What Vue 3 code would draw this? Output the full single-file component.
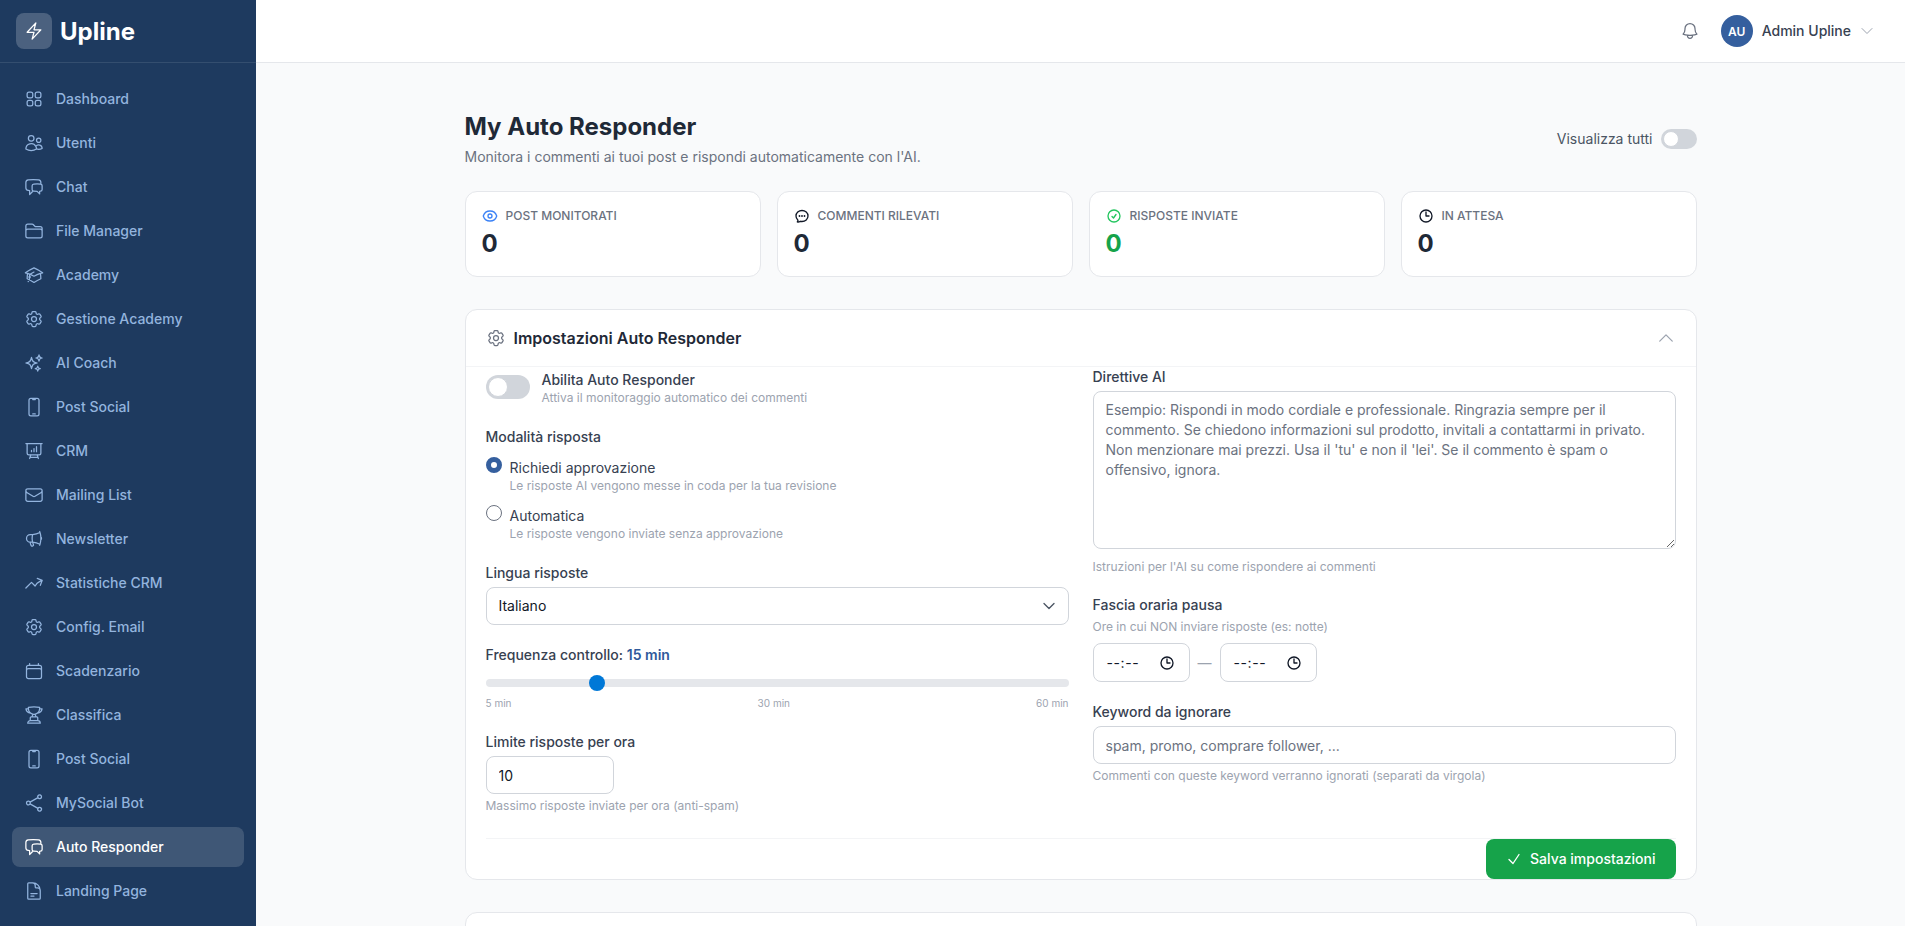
<script setup>
import { h } from 'vue'

const P = {
  grid: 'M3.75 6A2.25 2.25 0 0 1 6 3.75h2.25A2.25 2.25 0 0 1 10.5 6v2.25a2.25 2.25 0 0 1-2.25 2.25H6a2.25 2.25 0 0 1-2.25-2.25V6ZM3.75 15.75A2.25 2.25 0 0 1 6 13.5h2.25a2.25 2.25 0 0 1 2.25 2.25V18a2.25 2.25 0 0 1-2.25 2.25H6A2.25 2.25 0 0 1 3.75 18v-2.25ZM13.5 6a2.25 2.25 0 0 1 2.25-2.25H18A2.25 2.25 0 0 1 20.25 6v2.25A2.25 2.25 0 0 1 18 10.5h-2.25a2.25 2.25 0 0 1-2.25-2.25V6ZM13.5 15.75a2.25 2.25 0 0 1 2.25-2.25H18a2.25 2.25 0 0 1 2.25 2.25V18A2.25 2.25 0 0 1 18 20.25h-2.25A2.25 2.25 0 0 1 13.5 18v-2.25Z',
  users: 'M15 19.128a9.38 9.38 0 0 0 2.625.372 9.337 9.337 0 0 0 4.121-.952 4.125 4.125 0 0 0-7.533-2.493M15 19.128v-.003c0-1.113-.285-2.16-.786-3.07M15 19.128v.106A12.318 12.318 0 0 1 8.624 21c-2.331 0-4.512-.645-6.374-1.766l-.001-.109a6.375 6.375 0 0 1 11.964-3.07M12 6.375a3.375 3.375 0 1 1-6.75 0 3.375 3.375 0 0 1 6.75 0Zm8.25 2.25a2.625 2.625 0 1 1-5.25 0 2.625 2.625 0 0 1 5.25 0Z',
  chat: 'M20.25 8.511c.884.284 1.5 1.128 1.5 2.097v4.286c0 1.136-.847 2.1-1.98 2.193-.34.027-.68.052-1.02.072v3.091l-3-3c-1.354 0-2.694-.055-4.02-.163a2.115 2.115 0 0 1-.825-.242m9.345-8.334a2.126 2.126 0 0 0-.476-.095 48.64 48.64 0 0 0-8.048 0c-1.131.094-1.976 1.057-1.976 2.192v4.286c0 .837.46 1.58 1.155 1.951m9.345-8.334V6.637c0-1.621-1.152-3.026-2.76-3.235A48.455 48.455 0 0 0 11.25 3c-2.115 0-4.198.137-6.24.402-1.608.209-2.76 1.614-2.76 3.235v6.226c0 1.621 1.152 3.026 2.76 3.235.577.075 1.157.14 1.74.194V21l4.155-4.155',
  folder: 'M2.25 12.75V12A2.25 2.25 0 0 1 4.5 9.75h15A2.25 2.25 0 0 1 21.75 12v.75m-8.69-6.44-2.12-2.12a1.5 1.5 0 0 0-1.061-.44H4.5A2.25 2.25 0 0 0 2.25 6v12a2.25 2.25 0 0 0 2.25 2.25h15A2.25 2.25 0 0 0 21.75 18V9a2.25 2.25 0 0 0-2.25-2.25h-5.379a1.5 1.5 0 0 1-1.06-.44Z',
  cap: 'M4.26 10.147a60.438 60.438 0 0 0-.491 6.347A48.62 48.62 0 0 1 12 20.904a48.62 48.62 0 0 1 8.232-4.41 60.46 60.46 0 0 0-.491-6.347m-15.482 0a50.636 50.636 0 0 0-2.658-.813A59.906 59.906 0 0 1 12 3.493a59.903 59.903 0 0 1 10.399 5.84c-.896.248-1.783.52-2.658.814m-15.482 0A50.717 50.717 0 0 1 12 13.489a50.702 50.702 0 0 1 7.74-3.342M6.75 15a.75.75 0 1 0 0-1.5.75.75 0 0 0 0 1.5Zm0 0v-3.675A55.378 55.378 0 0 1 12 8.443m-7.007 11.55A5.981 5.981 0 0 0 6.75 15.75v-1.5',
  cog: 'M9.594 3.94c.09-.542.56-.94 1.11-.94h2.593c.55 0 1.02.398 1.11.94l.213 1.281c.063.374.313.686.645.87.074.04.147.083.22.127.325.196.72.257 1.075.124l1.217-.456a1.125 1.125 0 0 1 1.37.49l1.296 2.247a1.125 1.125 0 0 1-.26 1.431l-1.003.827c-.293.241-.438.613-.43.992a7.723 7.723 0 0 1 0 .255c-.008.378.137.75.43.991l1.004.827c.424.35.534.955.26 1.43l-1.298 2.247a1.125 1.125 0 0 1-1.369.491l-1.217-.456c-.355-.133-.75-.072-1.076.124a6.47 6.47 0 0 1-.22.128c-.331.183-.581.495-.644.869l-.213 1.281c-.09.543-.56.94-1.11.94h-2.594c-.55 0-1.019-.398-1.11-.94l-.213-1.281c-.062-.374-.312-.686-.644-.87a6.52 6.52 0 0 1-.22-.127c-.325-.196-.72-.257-1.076-.124l-1.217.456a1.125 1.125 0 0 1-1.369-.49l-1.297-2.247a1.125 1.125 0 0 1 .26-1.431l1.004-.827c.292-.24.437-.613.43-.991a6.932 6.932 0 0 1 0-.255c.007-.38-.138-.751-.43-.992l-1.004-.827a1.125 1.125 0 0 1-.26-1.43l1.297-2.247a1.125 1.125 0 0 1 1.37-.491l1.216.456c.356.133.751.072 1.076-.124.072-.044.146-.086.22-.128.332-.183.582-.495.644-.869l.214-1.28ZM15 12a3 3 0 1 1-6 0 3 3 0 0 1 6 0Z',
  sparkles: 'M9.813 15.904 9 18.75l-.813-2.846a4.5 4.5 0 0 0-3.09-3.09L2.25 12l2.846-.813a4.5 4.5 0 0 0 3.09-3.09L9 5.25l.813 2.846a4.5 4.5 0 0 0 3.09 3.09L15.75 12l-2.846.813a4.5 4.5 0 0 0-3.09 3.09ZM18.259 8.715 18 9.75l-.259-1.035a3.375 3.375 0 0 0-2.455-2.456L14.25 6l1.036-.259a3.375 3.375 0 0 0 2.455-2.456L18 2.25l.259 1.035a3.375 3.375 0 0 0 2.456 2.456L21.75 6l-1.035.259a3.375 3.375 0 0 0-2.456 2.456ZM16.894 20.567 16.5 21.75l-.394-1.183a2.25 2.25 0 0 0-1.423-1.423L13.5 18.75l1.183-.394a2.25 2.25 0 0 0 1.423-1.423l.394-1.183.394 1.183a2.25 2.25 0 0 0 1.423 1.423l1.183.394-1.183.394a2.25 2.25 0 0 0-1.423 1.423Z',
  phone: 'M10.5 1.5H8.25A2.25 2.25 0 0 0 6 3.75v16.5a2.25 2.25 0 0 0 2.25 2.25h7.5A2.25 2.25 0 0 0 18 20.25V3.75a2.25 2.25 0 0 0-2.25-2.25H13.5m-3 0V3h3V1.5m-3 0h3m-3 18.75h3',
  board: 'M3.75 3v11.25A2.25 2.25 0 0 0 6 16.5h2.25M3.75 3h-1.5m1.5 0h16.5m0 0h1.5m-1.5 0v11.25A2.25 2.25 0 0 1 18 16.5h-2.25m-7.5 0h7.5m-7.5 0-1 3m8.5-3 1 3m0 0 .5 1.5m-.5-1.5h-9.5m0 0-.5 1.5M9 11.25v1.5M12 9v3.75m3-6v6',
  mail: 'M21.75 6.75v10.5a2.25 2.25 0 0 1-2.25 2.25h-15a2.25 2.25 0 0 1-2.25-2.25V6.75m19.5 0A2.25 2.25 0 0 0 19.5 4.5h-15a2.25 2.25 0 0 0-2.25 2.25m19.5 0v.243a2.25 2.25 0 0 1-1.07 1.916l-7.5 4.615a2.25 2.25 0 0 1-2.36 0L3.32 8.91a2.25 2.25 0 0 1-1.07-1.916V6.75',
  mega: 'M10.34 15.84c-.688-.06-1.386-.09-2.09-.09H7.5a4.5 4.5 0 1 1 0-9h.75c.704 0 1.402-.03 2.09-.09m0 9.18c.253.962.584 1.892.985 2.783.247.55.06 1.21-.463 1.511l-.657.38c-.551.318-1.26.117-1.527-.461a20.845 20.845 0 0 1-1.44-4.282m3.102.069a18.03 18.03 0 0 1-.59-4.59c0-1.586.205-3.124.59-4.59m0 9.18a23.848 23.848 0 0 1 8.835 2.535M10.34 6.66a23.847 23.847 0 0 0 8.835-2.535m0 0A23.74 23.74 0 0 0 18.795 3m.38 1.125a23.91 23.91 0 0 1 1.014 5.395m-1.014 8.855c-.118.38-.245.754-.38 1.125m.38-1.125a23.91 23.91 0 0 0 1.014-5.395m0-3.46c.495.413.811 1.035.811 1.73 0 .695-.316 1.317-.811 1.73m0-3.46a24.347 24.347 0 0 1 0 3.46',
  trend: 'M2.25 18 9 11.25l4.306 4.306a11.95 11.95 0 0 1 5.814-5.518l2.74-1.22m0 0-5.94-2.281m5.94 2.28-2.28 5.941',
  cal: 'M6.75 3v2.25M17.25 3v2.25M3 18.75V7.5a2.25 2.25 0 0 1 2.25-2.25h13.5A2.25 2.25 0 0 1 21 7.5v11.25m-18 0A2.25 2.25 0 0 0 5.25 21h13.5A2.25 2.25 0 0 0 21 18.75m-18 0v-7.5A2.25 2.25 0 0 1 5.25 9h13.5A2.25 2.25 0 0 1 21 11.25v7.5',
  trophy: 'M16.5 18.75h-9m9 0a3 3 0 0 1 3 3h-15a3 3 0 0 1 3-3m9 0v-3.375c0-.621-.503-1.125-1.125-1.125h-.871M7.5 18.75v-3.375c0-.621.504-1.125 1.125-1.125h.872m5.007 0H9.497m5.007 0a7.454 7.454 0 0 1-.982-3.172M9.497 14.25a7.454 7.454 0 0 0 .981-3.172M5.25 4.236c-.982.143-1.954.317-2.916.52A6.003 6.003 0 0 0 7.73 9.728M5.25 4.236V4.5c0 2.108.966 3.99 2.48 5.228M5.25 4.236V2.721C7.456 2.41 9.71 2.25 12 2.25c2.291 0 4.545.16 6.75.47v1.516M7.73 9.728a6.726 6.726 0 0 0 2.748 1.35m8.272-6.842V4.5c0 2.108-.966 3.99-2.48 5.228m2.48-5.492a46.32 46.32 0 0 1 2.916.52 6.003 6.003 0 0 1-5.395 4.972m0 0a6.726 6.726 0 0 1-2.749 1.35m0 0a6.772 6.772 0 0 1-3.044 0',
  share: 'M7.217 10.907a2.25 2.25 0 1 0 0 2.186m0-2.186c.18.324.283.696.283 1.093s-.103.77-.283 1.093m0-2.186 9.566-5.314m-9.566 7.5 9.566 5.314m0 0a2.25 2.25 0 1 0 3.935 2.186 2.25 2.25 0 0 0-3.935-2.186Zm0-12.814a2.25 2.25 0 1 0 3.933-2.185 2.25 2.25 0 0 0-3.933 2.185Z',
  doc: 'M19.5 14.25v-2.625a3.375 3.375 0 0 0-3.375-3.375h-1.5A1.125 1.125 0 0 1 13.5 7.125v-1.5a3.375 3.375 0 0 0-3.375-3.375H8.25m0 12.75h7.5m-7.5 3H12M10.5 2.25H5.625c-.621 0-1.125.504-1.125 1.125v17.25c0 .621.504 1.125 1.125 1.125h12.75c.621 0 1.125-.504 1.125-1.125V11.25a9 9 0 0 0-9-9Z',
  bolt: 'm3.75 13.5 10.5-11.25L12 10.5h8.25L9.75 21.75 12 13.5H3.75Z',
  bell: 'M14.857 17.082a23.848 23.848 0 0 0 5.454-1.31A8.967 8.967 0 0 1 18 9.75V9A6 6 0 0 0 6 9v.75a8.967 8.967 0 0 1-2.312 6.022c1.733.64 3.56 1.085 5.455 1.31m5.714 0a24.255 24.255 0 0 1-5.714 0m5.714 0a3 3 0 1 1-5.714 0',
  down: 'm19.5 8.25-7.5 7.5-7.5-7.5',
  up: 'm4.5 15.75 7.5-7.5 7.5 7.5',
  eye: 'M2.036 12.322a1.012 1.012 0 0 1 0-.639C3.423 7.51 7.36 4.5 12 4.5c4.638 0 8.573 3.007 9.963 7.178.07.207.07.431 0 .639C20.577 16.49 16.64 19.5 12 19.5c-4.638 0-8.573-3.007-9.963-7.178ZM15 12a3 3 0 1 1-6 0 3 3 0 0 1 6 0Z',
  bubble: 'M8.625 12a.375.375 0 1 1-.75 0 .375.375 0 0 1 .75 0Zm0 0H8.25m4.125 0a.375.375 0 1 1-.75 0 .375.375 0 0 1 .75 0Zm0 0H12m4.125 0a.375.375 0 1 1-.75 0 .375.375 0 0 1 .75 0Zm0 0h-.375M21 12c0 4.556-4.03 8.25-9 8.25a9.764 9.764 0 0 1-2.555-.337A5.972 5.972 0 0 1 5.41 20.97a5.969 5.969 0 0 1-.474-.065 4.48 4.48 0 0 0 .978-2.025c.09-.457-.133-.901-.467-1.226C3.93 16.178 3 14.189 3 12c0-4.556 4.03-8.25 9-8.25s9 3.694 9 8.25Z',
  checkc: 'M9 12.75 11.25 15 15 9.75M21 12a9 9 0 1 1-18 0 9 9 0 0 1 18 0Z',
  clock: 'M12 6v6h4.5m4.5 0a9 9 0 1 1-18 0 9 9 0 0 1 18 0Z',
  check: 'm4.5 12.75 6 6 9-13.5',
}

const Icon = (props) =>
  h('svg', { viewBox: '0 0 24 24', fill: 'none', stroke: 'currentColor', 'stroke-width': props.sw || 1.5, 'stroke-linecap': 'round', 'stroke-linejoin': 'round', width: props.size || 20, height: props.size || 20, class: props.cls, style: 'flex:none;display:block' }, [h('path', { d: P[props.name] })])
Icon.props = ['name', 'size', 'sw', 'cls']

const nav = [
  ['grid', 'Dashboard'], ['users', 'Utenti'], ['chat', 'Chat'], ['folder', 'File Manager'], ['cap', 'Academy'],
  ['cog', 'Gestione Academy'], ['sparkles', 'AI Coach'], ['phone', 'Post Social'], ['board', 'CRM'], ['mail', 'Mailing List'],
  ['mega', 'Newsletter'], ['trend', 'Statistiche CRM'], ['cog', 'Config. Email'], ['cal', 'Scadenzario'], ['trophy', 'Classifica'],
  ['phone', 'Post Social'], ['share', 'MySocial Bot'], ['chat', 'Auto Responder', true], ['doc', 'Landing Page'],
]
const stats = [
  { icon: 'eye', label: 'POST MONITORATI', iconCls: 'c-blue' },
  { icon: 'bubble', label: 'COMMENTI RILEVATI', iconCls: 'c-ink' },
  { icon: 'checkc', label: 'RISPOSTE INVIATE', iconCls: 'c-green', valCls: 'v-green' },
  { icon: 'clock', label: 'IN ATTESA', iconCls: 'c-ink' },
]
const placeholder = "Esempio: Rispondi in modo cordiale e professionale. Ringrazia sempre per il commento. Se chiedono informazioni sul prodotto, invitali a contattarmi in privato. Non menzionare mai prezzi. Usa il 'tu' e non il 'lei'. Se il commento è spam o offensivo, ignora."
</script>

<template>
  <div class="app">
    <aside class="side">
      <div class="brand">
        <span class="logo"><Icon name="bolt" :size="20" /></span>
        <span class="brand-name">Upline</span>
      </div>
      <nav class="nav">
        <a v-for="(n, i) in nav" :key="i" class="nav-item" :class="{ active: n[2] }">
          <Icon :name="n[0]" :size="20" />
          <span>{{ n[1] }}</span>
        </a>
      </nav>
    </aside>
    <div class="right">
      <header class="top">
        <Icon name="bell" :size="20" cls="bell" />
        <div class="user">
          <span class="avatar">AU</span>
          <span class="uname">Admin Upline</span>
          <Icon name="down" :size="16" cls="ucaret" />
        </div>
      </header>
      <main class="main">
        <div class="wrap">
          <div class="head">
            <div>
              <h1>My Auto Responder</h1>
              <p class="sub">Monitora i commenti ai tuoi post e rispondi automaticamente con l'AI.</p>
            </div>
            <div class="view-all">
              <span>Visualizza tutti</span>
              <span class="tog tog-sm"><i></i></span>
            </div>
          </div>

          <div class="stats">
            <div v-for="s in stats" :key="s.label" class="stat">
              <div class="stat-top">
                <Icon :name="s.icon" :size="16" :sw="2" :cls="s.iconCls" />
                <span>{{ s.label }}</span>
              </div>
              <div class="stat-val" :class="s.valCls">0</div>
            </div>
          </div>

          <section class="card">
            <div class="card-head">
              <Icon name="cog" :size="20" cls="c-gray" />
              <h2>Impostazioni Auto Responder</h2>
              <Icon name="up" :size="20" cls="c-caret" />
            </div>
            <div class="card-body">
              <div class="grid">
                <div class="col">
                  <div class="enable">
                    <span class="tog"><i></i></span>
                    <div>
                      <div class="lbl">Abilita Auto Responder</div>
                      <div class="hint tight">Attiva il monitoraggio automatico dei commenti</div>
                    </div>
                  </div>

                  <div class="lbl mode-lbl">Modalità risposta</div>
                  <label class="radio">
                    <input type="radio" name="mode" checked />
                    <span>
                      <span class="opt">Richiedi approvazione</span>
                      <span class="hint tight">Le risposte AI vengono messe in coda per la tua revisione</span>
                    </span>
                  </label>
                  <label class="radio">
                    <input type="radio" name="mode" />
                    <span>
                      <span class="opt">Automatica</span>
                      <span class="hint tight">Le risposte vengono inviate senza approvazione</span>
                    </span>
                  </label>

                  <div class="lbl lang-lbl">Lingua risposte</div>
                  <div class="sel-wrap">
                    <select class="ctl"><option>Italiano</option></select>
                    <Icon name="down" :size="16" :sw="2" cls="sel-caret" />
                  </div>

                  <div class="lbl gap-t">Frequenza controllo: <b class="freq">15 min</b></div>
                  <input class="range" type="range" min="5" max="60" value="15" />
                  <div class="ticks"><span>5 min</span><span>30 min</span><span>60 min</span></div>

                  <div class="lbl limit-lbl">Limite risposte per ora</div>
                  <input class="ctl num" type="text" value="10" />
                  <div class="hint">Massimo risposte inviate per ora (anti-spam)</div>
                </div>

                <div class="col">
                  <div class="lbl">Direttive AI</div>
                  <textarea class="ctl area" rows="7" :placeholder="placeholder"></textarea>
                  <div class="hint area-hint">Istruzioni per l'AI su come rispondere ai commenti</div>

                  <div class="lbl gap-t">Fascia oraria pausa</div>
                  <div class="hint">Ore in cui NON inviare risposte (es: notte)</div>
                  <div class="times">
                    <div class="time"><span>--:--</span><Icon name="clock" :size="16" :sw="2" /></div>
                    <span class="dash">—</span>
                    <div class="time"><span>--:--</span><Icon name="clock" :size="16" :sw="2" /></div>
                  </div>

                  <div class="lbl gap-t">Keyword da ignorare</div>
                  <input class="ctl" type="text" placeholder="spam, promo, comprare follower, ..." />
                  <div class="hint">Commenti con queste keyword verranno ignorati (separati da virgola)</div>
                </div>
              </div>
              <div class="foot">
                <button class="save"><Icon name="check" :size="16" :sw="2" /><span>Salva impostazioni</span></button>
              </div>
            </div>
          </section>

          <section class="card next"></section>
        </div>
      </main>
    </div>
  </div>
</template>

<style>
html, body { margin: 0; padding: 0; height: 100%; overflow: hidden; background: #fff; }
</style>

<style scoped>
* { box-sizing: border-box; }
.app { display: flex; height: 926px; overflow: hidden; font-family: Inter, "Noto Sans", sans-serif; color: #1f2937; background: #fff; padding-right: 2px; }
.side { width: 256px; flex: none; background: #1e3a5f; overflow: hidden; }
.brand { height: 63px; display: flex; align-items: center; gap: 8px; padding: 0 16px; border-bottom: 1px solid rgba(255,255,255,.1); }
.logo { width: 36px; height: 36px; border-radius: 8px; background: rgba(255,255,255,.2); color: #fff; display: flex; align-items: center; justify-content: center; }
.brand-name { font-size: 24px; font-weight: 700; color: #fff; }
.nav { padding: 16px 12px; display: flex; flex-direction: column; gap: 4px; }
.nav-item { height: 40px; flex: none; display: flex; align-items: center; gap: 12px; padding: 0 12px; border-radius: 8px; font-size: 14px; font-weight: 500; color: #93b4de; line-height: 20px; }
.nav-item.active { background: rgba(255,255,255,.15); color: #fff; }
.right { flex: 1; min-width: 0; display: flex; flex-direction: column; background: #f9fafb; }
.top { height: 63px; flex: none; background: #fff; border-bottom: 1px solid #e5e7eb; display: flex; align-items: center; justify-content: flex-end; padding-right: 30px; }
.bell { color: #6b7280; margin-right: 21px; }
.user { display: flex; align-items: center; }
.avatar { width: 32px; height: 32px; border-radius: 50%; background: #355f9e; color: #fff; font-size: 12px; font-weight: 600; display: flex; align-items: center; justify-content: center; }
.uname { font-size: 14px; font-weight: 500; color: #374151; margin-left: 9px; margin-right: 8px; line-height: 20px; }
.ucaret { color: #9ca3af; }
.main { flex: 1; overflow: hidden; }
.wrap { max-width: 1280px; margin: 0 auto; padding: 48px 24px 0; }
.head { display: flex; justify-content: space-between; align-items: center; margin-bottom: 24px; }
h1 { margin: 0; font-size: 24px; line-height: 32px; font-weight: 700; color: #1f2937; }
.sub { margin: 4px 0 0; font-size: 14px; line-height: 20px; color: #6b7280; }
.view-all { display: flex; align-items: center; gap: 8px; font-size: 14px; color: #4b5563; line-height: 20px; }
.tog { position: relative; display: block; flex: none; width: 44px; height: 24px; border-radius: 999px; background: #d1d5db; }
.tog i { position: absolute; top: 2px; left: 2px; width: 20px; height: 20px; border-radius: 50%; background: #fff; border: 1px solid #d1d5db; }
.tog-sm { width: 36px; height: 20px; }
.tog-sm i { width: 16px; height: 16px; }
.stats { display: grid; grid-template-columns: repeat(4, 1fr); gap: 16px; }
.stat { height: 86px; background: #fff; border: 1px solid #e5e7eb; border-radius: 12px; padding: 16px; }
.stat-top { display: flex; align-items: center; gap: 8px; font-size: 12px; line-height: 16px; font-weight: 500; color: #6b7280; margin-bottom: 4px; }
.stat-val { font-size: 24px; line-height: 32px; font-weight: 700; color: #1f2937; }
.v-green { color: #16a34a; }
.c-blue { color: #3b82f6; }
.c-green { color: #22c55e; }
.c-ink { color: #111827; }
.c-gray { color: #6b7280; }
.c-caret { color: #9ca3af; margin-left: auto; }
.card { background: #fff; border: 1px solid #e5e7eb; border-radius: 12px; margin-top: 32px; }
.card-head { height: 57px; display: flex; align-items: center; gap: 8px; padding: 0 20px; border-bottom: 1px solid #f3f4f6; }
h2 { margin: 0; font-size: 16px; font-weight: 600; line-height: 24px; color: #1f2937; }
.card-body { padding: 0 20px; }
.grid { display: grid; grid-template-columns: 1fr 1fr; gap: 24px; }
.col { min-width: 0; display: flex; flex-direction: column; }
.lbl { font-size: 14px; line-height: 20px; font-weight: 500; color: #374151; }
.hint { font-size: 12px; line-height: 16px; color: #9ca3af; margin-top: 4px; }
.hint.tight { margin-top: 0; display: block; }
.enable { display: flex; align-items: center; gap: 12px; margin-top: 3px; }
.enable .tog { margin-top: -2px; }
.mode-lbl { margin-top: 21px; margin-bottom: 11px; }
.radio { display: flex; align-items: flex-start; gap: 8px; margin-bottom: 12px; }
.radio:last-of-type { margin-bottom: 0; }
.radio input { appearance: none; -webkit-appearance: none; width: 16px; height: 16px; margin: -1px 0 0; flex: none; border-radius: 50%; background: #fff; border: 1.5px solid #6b7280; }
.radio input:checked { border: 5px solid #355f9e; }
.opt { display: block; font-size: 14px; line-height: 20px; color: #374151; }
.gap-t { margin-top: 20px; }
.lang-lbl { margin-top: 21px; }
.ctl { display: block; width: 100%; height: 38px; border: 1px solid #d1d5db; border-radius: 8px; padding: 0 12px; font: 14px/20px Inter, sans-serif; color: #111827; background: #fff; outline: none; margin-top: 4px; }
.ctl::placeholder { color: #6b7280; opacity: 1; }
.sel-wrap { position: relative; }
select.ctl { appearance: none; -webkit-appearance: none; }
.sel-caret { position: absolute; right: 12px; top: 15px; color: #4b5563; }
.freq { font-weight: 600; color: #2f5a9b; }
.range { display: block; width: 100%; height: 8px; margin: 14px 0 0; padding: 0; border-radius: 8px; background: #e5e7eb; appearance: none; -webkit-appearance: none; outline: none; }
.range::-webkit-slider-thumb { -webkit-appearance: none; appearance: none; width: 16px; height: 16px; border-radius: 50%; background: #0078d7; border: 0; }
.ticks { display: flex; justify-content: space-between; font-size: 10px; line-height: 15px; color: #9ca3af; margin-top: 9px; }
.limit-lbl { margin-top: 21px; }
.num { width: 128px; }
.area { height: 158px; padding: 8px 12px; resize: vertical; }
.area-hint { margin-top: 10px; }
.times { display: flex; align-items: center; gap: 8px; margin-top: 8px; }
.time { width: 97px; height: 39px; border: 1px solid #d1d5db; border-radius: 8px; display: flex; align-items: center; justify-content: space-between; padding: 0 14px 0 13px; font-size: 14px; letter-spacing: 0.6px; color: #111827; background: #fff; }
.dash { font-size: 14px; color: #9ca3af; }
.foot { border-top: 1px solid #f3f4f6; margin-top: 24px; display: flex; justify-content: flex-end; }
.save { height: 40px; display: flex; align-items: center; gap: 8px; padding: 0 20px; border: 0; border-radius: 8px; background: #16a34a; color: #fff; font: 500 14px/20px Inter, sans-serif; }
.next { height: 120px; }
</style>
